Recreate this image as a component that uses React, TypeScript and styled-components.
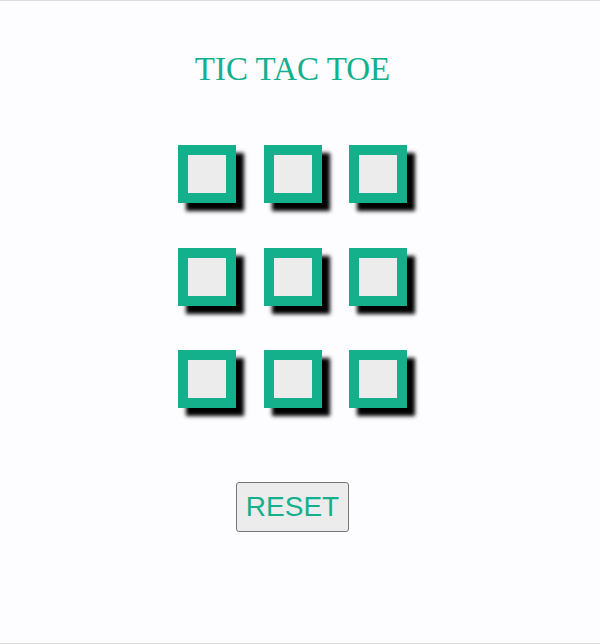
import React from "react";
import styled, { createGlobalStyle } from "styled-components";

const TEAL = "#14b08c";

const Global = createGlobalStyle`
  html, body {
    margin: 0;
    padding: 0;
    background: #fdfcfe;
  }
  * { box-sizing: border-box; }
`;

const Page = styled.main`
  height: 644px;
  width: 600px;
  padding-right: 15px;
  border-top: 1px solid #dcdcdc;
  border-bottom: 1px solid #dcdcdc;
  display: flex;
  flex-direction: column;
  align-items: center;
  background: #fdfcfe;
`;

const Title = styled.h1`
  margin: 49px 0 0;
  font-family: "Liberation Serif", "Times New Roman", serif;
  font-weight: 400;
  font-size: 33px;
  line-height: 38px;
  color: ${TEAL};
`;

const Board = styled.div`
  margin-top: 57px;
  display: grid;
  grid-template-columns: repeat(3, 58px);
  grid-auto-rows: 58px;
  column-gap: 27.5px;
  row-gap: 44.5px;
`;

const Cell = styled.button`
  width: 58px;
  height: 58px;
  padding: 0;
  margin: 0;
  background: #ececec;
  border: 10px solid ${TEAL};
  border-radius: 0;
  box-shadow: 8px 8px 4px #000;
  cursor: pointer;
`;

const ResetButton = styled.button`
  margin-top: 74px;
  width: 113px;
  height: 50px;
  padding: 0;
  background: #ececec;
  border: 1px solid #767676;
  border-radius: 3px;
  font-family: "Liberation Sans", Arial, sans-serif;
  font-size: 28px;
  color: ${TEAL};
  cursor: pointer;
`;

export default function App() {
  const [cells, setCells] = React.useState<string[]>(Array(9).fill(""));
  return (
    <>
      <Global />
      <Page>
        <Title>TIC TAC TOE</Title>
        <Board>
          {cells.map((c, i) => (
            <Cell key={i} aria-label={`cell ${i + 1}`}>
              {c}
            </Cell>
          ))}
        </Board>
        <ResetButton onClick={() => setCells(Array(9).fill(""))}>RESET</ResetButton>
      </Page>
    </>
  );
}
